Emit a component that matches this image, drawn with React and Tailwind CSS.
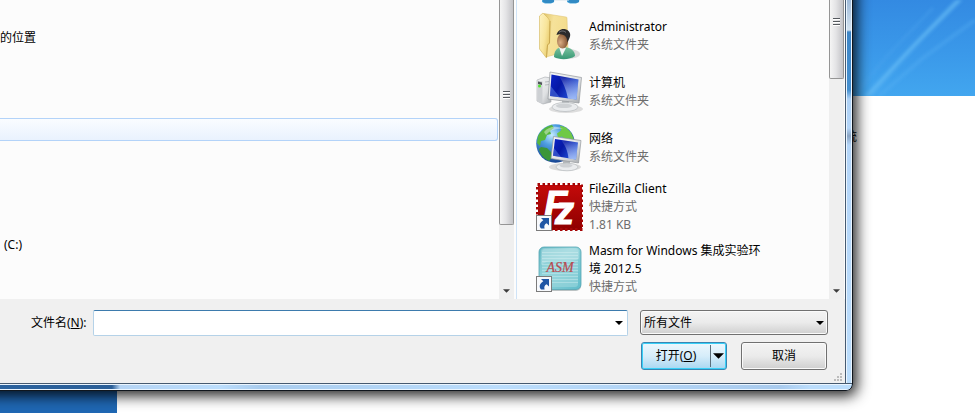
import React from "react";

const places = ["", "的位置", "", "", "", "", "", "", "", "", "(C:)"];
const SELECTED_PLACE = 5;

function ShortcutBadge({ y }) {
  return (
    <g transform={`translate(1 ${y})`}>
      <rect x="0.5" y="0.5" width="15" height="15" fill="#f7f9fc" stroke="#7b7b7b" />
      <path
        d="M5 3h8v7.500l-2.300-2.200C8.600 9.200 7.800 11 8.600 13.500H5C2.800 11 3.400 7.600 7.300 5.300z"
        fill="#1f56a5"
      />
    </g>
  );
}

function LibraryIcon() {
  return (
    <svg className="size-12 shrink-0" viewBox="0 0 48 48" aria-hidden="true">
      <path d="M7 40h13l-1 6-3 1.500h-6L7 46zM32 40h13l-1 6-3 1.500h-6L32 46z" fill="#4ba8dc" />
      <path d="M8 44h11v2l-3 1h-5l-3-1zM33 44h11v2l-3 1h-5l-3-1z" fill="#318ac4" />
      <path d="M19 40h15v4.500H19z" fill="#d7e3ea" />
    </svg>
  );
}

function UserFolderIcon() {
  return (
    <svg className="size-12 shrink-0" viewBox="0 0 48 48" aria-hidden="true">
      <defs>
        <linearGradient id="uf-back" x1="0" x2="1" y1="0" y2="0.3">
          <stop offset="0" stopColor="#e0c469" />
          <stop offset="0.4" stopColor="#f6e29a" />
          <stop offset="1" stopColor="#f3dc8c" />
        </linearGradient>
        <linearGradient id="uf-flap" x1="0" x2="1" y1="0" y2="0.6">
          <stop offset="0" stopColor="#fdf3c2" />
          <stop offset="0.6" stopColor="#f8e59b" />
          <stop offset="1" stopColor="#e8cb6c" />
        </linearGradient>
        <radialGradient id="uf-face" cx="0.3" cy="0.6" r="0.7">
          <stop offset="0" stopColor="#d9ac82" />
          <stop offset="1" stopColor="#80502f" />
        </radialGradient>
        <linearGradient id="uf-body" x1="0" x2="0" y1="0" y2="1">
          <stop offset="0" stopColor="#7cc3a0" />
          <stop offset="1" stopColor="#379874" />
        </linearGradient>
      </defs>
      <ellipse cx="33" cy="42" rx="12" ry="5" fill="#000" opacity="0.13" />
      <path d="M9 1.500 31 5q1 0 1 1l1 33-22 6z" fill="url(#uf-back)" stroke="#dcbf6c" strokeWidth="0.5" />
      <path d="M4.500 4 8 1l5 5 2 3-.5 22-2 2-1 13-7-9z" fill="url(#uf-flap)" stroke="#d4b65b" strokeWidth="0.6" />
      <path d="M15 9 14.500 31l-2 2-1 12" fill="none" stroke="#c09c42" strokeWidth="0.7" />
      <path d="M19 45c0-6 3-10 9-10 8 0 12 4 12 9-5 4-16 4-21 1z" fill="url(#uf-body)" />
      <path d="m24 35 3 9 4-8z" fill="#f2f5f3" />
      <ellipse cx="27.500" cy="29" rx="5.500" ry="7.500" fill="url(#uf-face)" />
      <path d="M21.500 23c1-4 4-6.500 8-6 5 1 7 5 5 9l-2 4.500c-.5-4-1-6-4-7.500-2-1-5-1-7 0z" fill="#2b2a2c" />
      <path d="M24 20.500c2-2 5-2 7 0" fill="none" stroke="#77787d" />
    </svg>
  );
}

function ScreenGradients({ id }) {
  return (
    <>
      <linearGradient id={`${id}-screen`} x1="0" x2="1" y1="0" y2="0.5">
        <stop offset="0" stopColor="#0b24c8" />
        <stop offset="0.45" stopColor="#0618a5" />
        <stop offset="1" stopColor="#2656db" />
      </linearGradient>
      <linearGradient id={`${id}-case`} x1="0" x2="1" y1="0" y2="1">
        <stop offset="0" stopColor="#f6f7f8" />
        <stop offset="0.6" stopColor="#dfe1e3" />
        <stop offset="1" stopColor="#a6aaae" />
      </linearGradient>
      <linearGradient id={`${id}-glare`} x1="0" x2="0" y1="0" y2="1">
        <stop offset="0" stopColor="#fff" stopOpacity="0.05" />
        <stop offset="1" stopColor="#c4dbff" stopOpacity="0.75" />
      </linearGradient>
    </>
  );
}

function ComputerIcon() {
  return (
    <svg className="size-12 shrink-0" viewBox="0 0 48 48" aria-hidden="true">
      <defs>
        <ScreenGradients id="pc" />
      </defs>
      <ellipse cx="31" cy="41" rx="17" ry="4" fill="#000" opacity="0.12" />
      <path d="m2 12 8-3 6 1v24l-8 2-6-3z" fill="url(#pc-case)" stroke="#a4a8ac" strokeWidth="0.6" />
      <path d="m2.500 12.500 5 1v22l-5-2.500z" fill="#cdd0d3" />
      <path d="m3 13.500 4 1v2.500l-4-1z" fill="#50555a" />
      <circle cx="4.500" cy="18" r="1.500" fill="#4de52d" />
      <path d="M10 14 14 13.500M10 17l4-.5" stroke="#a4a8ac" strokeWidth="0.7" />
      <path d="m27 31 7 2v6h-7z" fill="#b4b8bb" />
      <ellipse cx="30" cy="39" rx="13" ry="4.500" fill="#eaecee" stroke="#b6babd" strokeWidth="0.7" />
      <ellipse cx="29" cy="37.800" rx="8" ry="2.300" fill="#ced1d4" />
      <path d="M15 4 46.500 9.500 44 35 13 31z" fill="url(#pc-case)" stroke="#94989c" strokeWidth="0.7" />
      <path d="m16.500 6.500 27 5L41.500 31.500 15 28z" fill="url(#pc-screen)" />
      <path d="m24 8 19.500 3.500-2 20L33 30.400C31 21 28 14 24 8z" fill="url(#pc-glare)" />
      <path d="m15.700 18 9 11.300L15 28z" fill="#6f9bf3" opacity="0.4" />
    </svg>
  );
}

function NetworkIcon() {
  return (
    <svg className="size-12 shrink-0" viewBox="0 0 48 48" aria-hidden="true">
      <defs>
        <ScreenGradients id="net" />
        <radialGradient id="net-globe" cx="0.4" cy="0.28" r="0.75">
          <stop offset="0" stopColor="#c5ecff" />
          <stop offset="0.35" stopColor="#4f9fe2" />
          <stop offset="1" stopColor="#123f8e" />
        </radialGradient>
      </defs>
      <ellipse cx="30" cy="43" rx="16" ry="4" fill="#000" opacity="0.13" />
      <circle cx="20.500" cy="19.500" r="19.300" fill="url(#net-globe)" />
      <path d="M3 12C7 5 12 2 17 1l2 3-4 3 1 3-4 1-2 5-4 1-1 5-3-3z" fill="#57b63d" />
      <path d="m25 1.500 6 2 5 5 3 7-5-1-3 2-4-4-4 1-1-4 4-3z" fill="#6fc946" />
      <path d="m6 23 6 1 4 4 2 3-3 5-1 1C9 35 5 30 4 25z" fill="#3c9638" />
      <path d="M9 8c4-5 12-7 19-3-7-1-13 1-17 6z" fill="#fff" opacity="0.4" />
      <path d="m28 34 7 2v6h-7z" fill="#b4b8bb" />
      <ellipse cx="32" cy="43" rx="11" ry="3.800" fill="#eaecee" stroke="#b6babd" strokeWidth="0.7" />
      <ellipse cx="31" cy="41.600" rx="6.500" ry="1.900" fill="#ced1d4" />
      <path d="M18.500 12.500 46 16.500 43.500 39 16 34.500z" fill="url(#net-case)" stroke="#94989c" strokeWidth="0.7" />
      <path d="M20 15 43 18.500 41 35.500 18 31.800z" fill="url(#net-screen)" />
      <path d="M26 16 43 18.500l-2 17-7.500-1C33 27 30 21 26 16z" fill="url(#net-glare)" />
      <path d="m19 24 7 9-8-1.200z" fill="#6f9bf3" opacity="0.4" />
    </svg>
  );
}

function FileZillaIcon() {
  return (
    <svg className="size-12 shrink-0" viewBox="0 0 48 48" aria-hidden="true">
      <defs>
        <linearGradient id="fz-red" x1="0" x2="0" y1="0" y2="1">
          <stop offset="0" stopColor="#c40a0a" />
          <stop offset="1" stopColor="#8e0000" />
        </linearGradient>
      </defs>
      <rect x="3" y="2" width="44" height="45" fill="url(#fz-red)" />
      <rect
        x="2.500"
        y="1.500"
        width="45"
        height="45"
        fill="none"
        stroke="#a60606"
        strokeWidth="3"
        strokeDasharray="2.500 2.500"
      />
      <text x="9" y="35" fill="#fff" stroke="#fff" strokeWidth="1.200" fontFamily="Liberation Sans, sans-serif" fontWeight="700" fontStyle="italic" fontSize="38">
        F
        <tspan x="20" y="41">z</tspan>
      </text>
      <ShortcutBadge y={32} />
    </svg>
  );
}

function MasmIcon() {
  return (
    <svg className="size-12 shrink-0" viewBox="0 0 48 48" aria-hidden="true">
      <defs>
        <linearGradient id="masm-bg" x1="0" x2="1" y1="0" y2="1">
          <stop offset="0" stopColor="#62b8c4" />
          <stop offset="0.4" stopColor="#93d5db" />
          <stop offset="1" stopColor="#5fbcca" />
        </linearGradient>
      </defs>
      <rect x="4" y="3" width="42" height="43" rx="5" fill="#8f9b9d" opacity="0.6" />
      <rect x="4" y="2" width="42" height="42.500" rx="5" fill="url(#masm-bg)" stroke="#55a5b2" strokeWidth="0.8" />
      <rect x="7" y="4" width="36" height="38" rx="3" fill="#98d6dc" opacity="0.65" />
      <path
        d="M7 7.500h36M7 10.500h36M7 13.500h36M7 16.500h36M7 19.500h36M7 22.500h36M7 25.500h36M7 28.500h36M7 31.500h36M7 34.500h36M7 37.500h36"
        stroke="#c8ebee"
        strokeWidth="0.7"
        opacity="0.7"
      />
      <path d="M6 6q0-3 4-3h30q4 0 4 4v7C33 19 17 12 6 20z" fill="#fff" opacity="0.2" />
      <text x="25" y="27" textAnchor="middle" fill="#b94a50" stroke="#b94a50" strokeWidth="0.2" fontFamily="Liberation Serif, serif" fontStyle="italic" fontSize="14">
        ASM
      </text>
      <ShortcutBadge y={31} />
    </svg>
  );
}

const files = [
  { name: "Administrator", details: ["系统文件夹"], Icon: UserFolderIcon },
  { name: "计算机", details: ["系统文件夹"], Icon: ComputerIcon },
  { name: "网络", details: ["系统文件夹"], Icon: NetworkIcon },
  { name: "FileZilla Client", details: ["快捷方式", "1.81 KB"], Icon: FileZillaIcon, tall: true },
  { name: "Masm for Windows 集成实验环境 2012.5", details: ["快捷方式"], Icon: MasmIcon, tall: true },
];

function ArrowDown({ className }) {
  return (
    <svg className={className} viewBox="0 0 8 4" aria-hidden="true">
      <path d="M0 0h8L4 4z" fill="currentColor" />
    </svg>
  );
}

function ScrollBar({ thumbClass }) {
  return (
    <div className="flex w-[15px] shrink-0 flex-col bg-[#efefef]">
      <div
        className={`flex w-full flex-col items-center gap-px rounded-b-[2px] border border-t-0 border-[#959595] bg-linear-to-r from-[#f5f5f5] via-[#e4e4e6] via-45% to-[#c4c4c8] ${thumbClass}`}
      >
        <span className="h-[2px] w-[7px] border-b border-white bg-[#55595e]" />
        <span className="h-[2px] w-[7px] border-b border-white bg-[#55595e]" />
        <span className="h-[2px] w-[7px] border-b border-white bg-[#55595e]" />
      </div>
      <button type="button" aria-label="向下滚动" className="mt-auto flex h-[17px] w-full items-center justify-center text-[#3c3c3c]">
        <ArrowDown className="h-[4px] w-[7px]" />
      </button>
    </div>
  );
}

function Wallpaper() {
  return (
    <svg className="h-24 w-full" viewBox="0 0 122 96" preserveAspectRatio="none" aria-hidden="true">
      <defs>
        <linearGradient id="sky" x1="0" x2="0" y1="0" y2="1">
          <stop offset="0" stopColor="#338ae2" />
          <stop offset="0.6" stopColor="#3b9aea" />
          <stop offset="1" stopColor="#42a6ef" />
        </linearGradient>
        <filter id="soft" x="-20%" y="-20%" width="140%" height="140%">
          <feGaussianBlur stdDeviation="1.500" />
        </filter>
      </defs>
      <rect width="122" height="96" fill="url(#sky)" />
      <g filter="url(#soft)">
        <path d="M10 96 50 54 96 6 102 0h8L72 38 44 68 20 96z" fill="#5cb6f4" opacity="0.5" />
        <path d="M14 96 60 46 106 0" fill="none" stroke="#7dcbfa" strokeWidth="1.500" opacity="0.45" />
        <path d="M6 90 34 56 80 8" fill="none" stroke="#4ba6ef" strokeWidth="3" opacity="0.3" />
        <path d="M26 96 70 58 122 20" fill="none" stroke="#5bb4f4" strokeWidth="4" opacity="0.3" />
      </g>
    </svg>
  );
}

const plainButton =
  "rounded-[3px] border border-[#707070] bg-linear-to-b from-[#f3f3f3] via-[#ebebeb] via-50% to-[#cfcfcf] shadow-[inset_0_0_0_1px_#fafafa]";

export default function App() {
  return (
    <div className="relative flex h-screen min-h-[413px] overflow-hidden bg-white font-['Noto_Sans','Noto_Sans_CJK_SC',sans-serif] text-[12px] leading-[18px] text-black">
      {/* Desktop behind the dialog */}
      <div className="absolute top-0 right-0 w-[122px]">
        <Wallpaper />
      </div>
      <div className="absolute bottom-0 left-0 h-[24px] w-[117px] bg-[#1f67b3]" />
      <span className="absolute top-[128px] right-[118px]">统</span>

      <main className="relative mr-[122px] mb-[22px] flex min-w-0 flex-1">
        <div className="absolute -top-8 right-0 bottom-0 -left-8 rounded-br-[7px] shadow-[2px_3px_14px_2px_rgba(0,0,0,0.85)]" />

        <div className="relative flex min-w-0 flex-1 flex-col overflow-hidden rounded-br-[7px] border-r border-b border-[#10161d] bg-[#b9dafa]">
          <div className="flex min-h-0 flex-1">
            <div className="flex min-w-0 flex-1 flex-col bg-[#f0f0f0]">
              <div className="flex min-h-0 flex-1 overflow-hidden bg-[#fcfcfc]">
                <ul className="min-w-0 flex-1 pt-[3px] pr-px">
                  {places.map((place, i) => (
                    <li
                      key={i}
                      className={
                        i === SELECTED_PLACE
                          ? "h-[23px] rounded-r-[3px] border border-l-0 border-[#b3d3f9] bg-linear-to-b from-[#fafcff] to-[#e9f2fe]"
                          : place === "(C:)"
                            ? "flex h-[23px] items-center pl-1"
                            : "flex h-[23px] items-center"
                      }
                    >
                      {place}
                    </li>
                  ))}
                </ul>
                <ScrollBar thumbClass="h-[225px] pt-[91px]" />

                <section className="ml-[2px] flex w-[329px] shrink-0 border-l border-[#cfe3f7] pr-px">
                  <ul className="min-w-0 flex-1 pl-[18px]">
                    <li className="flex h-2 flex-col justify-end overflow-hidden pb-1">
                      <LibraryIcon />
                    </li>
                    {files.map(({ name, details, Icon, tall }) => (
                      <li key={name} className={tall ? "flex h-[62px] items-center gap-[6px]" : "flex h-14 items-center gap-[6px]"}>
                        <Icon />
                        <div className="w-[180px]">
                          <p>{name}</p>
                          {details.map((detail) => (
                            <p key={detail} className="text-[#6d6d6d]">
                              {detail}
                            </p>
                          ))}
                        </div>
                      </li>
                    ))}
                  </ul>
                  <ScrollBar thumbClass="h-[79px] pt-[18px]" />
                </section>
              </div>

              <form className="relative flex h-[84px] shrink-0 flex-col gap-[6px] pt-[11px] pr-[17px]" onSubmit={(e) => e.preventDefault()}>
                <div className="flex">
                  <label htmlFor="file-name" className="w-[93px] shrink-0 self-center pl-[31px] whitespace-nowrap">
                    文件名(<u>N</u>):
                  </label>
                  <div className="flex h-[26px] min-w-0 flex-1 rounded-[2px] border border-[#b5d2e8] border-t-[#3d7bad] bg-white">
                    <input id="file-name" type="text" className="min-w-0 flex-1 bg-transparent px-1 outline-none" />
                    <button type="button" aria-label="历史记录" className="flex w-[16px] items-center justify-center">
                      <ArrowDown className="h-[4px] w-[8px]" />
                    </button>
                  </div>
                  <div className="relative ml-3 h-[25px] w-[188px]">
                    <select aria-label="文件类型" className={`size-full appearance-none pl-[3px] ${plainButton}`}>
                      <option>所有文件</option>
                    </select>
                    <ArrowDown className="pointer-events-none absolute top-[11px] right-1 h-[4px] w-[8px]" />
                  </div>
                </div>
                <div className="flex justify-end gap-[14px] pr-px">
                  <div className="flex h-[28px] w-[86px] rounded-[3px] border border-[#3a85b2] bg-linear-to-b from-[#edf7fd] via-[#d6edfa] via-50% to-[#a8d7f1] shadow-[inset_0_0_0_1px_#38d0f8]">
                    <button type="submit" className="flex-1">
                      打开(<u>O</u>)
                    </button>
                    <button type="button" aria-label="更多打开方式" className="my-[2px] flex w-[16px] items-center justify-center border-l border-[#5b6e7a]">
                      <ArrowDown className="h-[6px] w-[11px] shrink-0" />
                    </button>
                  </div>
                  <button type="button" className={`h-[28px] w-[86px] ${plainButton}`}>
                    取消
                  </button>
                </div>
                <svg className="absolute right-[3px] bottom-[2px] size-[8px]" viewBox="0 0 8 8" aria-hidden="true">
                  <path d="M6 0h2v2H6zM3 3h2v2H3zM6 3h2v2H6zM0 6h2v2H0zM3 6h2v2H3zM6 6h2v2H6z" fill="#bcbcbc" />
                </svg>
              </form>
            </div>
            <div className="flex w-[7px] shrink-0 border-l border-[#465a70]">
              <div className="flex-1 border-x border-[#eaf5ff] bg-[linear-gradient(to_bottom,#9fbad8_0px,#d3e2ef_30px,#3f86c6_32px,#4590d0_90px,#aed1f5_99px,#b4d5f8_128px,#8ba5c4_136px,#b4d5f8_145px,#bbddfc_100%)]" />
            </div>
          </div>
          <div className="flex h-[7px] shrink-0 border-t border-[#465a70] pr-px">
            <div className="flex-1 border-y border-[#eaf5ff] bg-[linear-gradient(to_right,#2b629e_0px,#2b5f98_112px,#b5d4f4_120px,#bbddfc_220px,#a9ccee_260px,#bbddfc_500px,#a9cbee_780px,#bbddfc_810px)]" />
          </div>
        </div>
      </main>
    </div>
  );
}
